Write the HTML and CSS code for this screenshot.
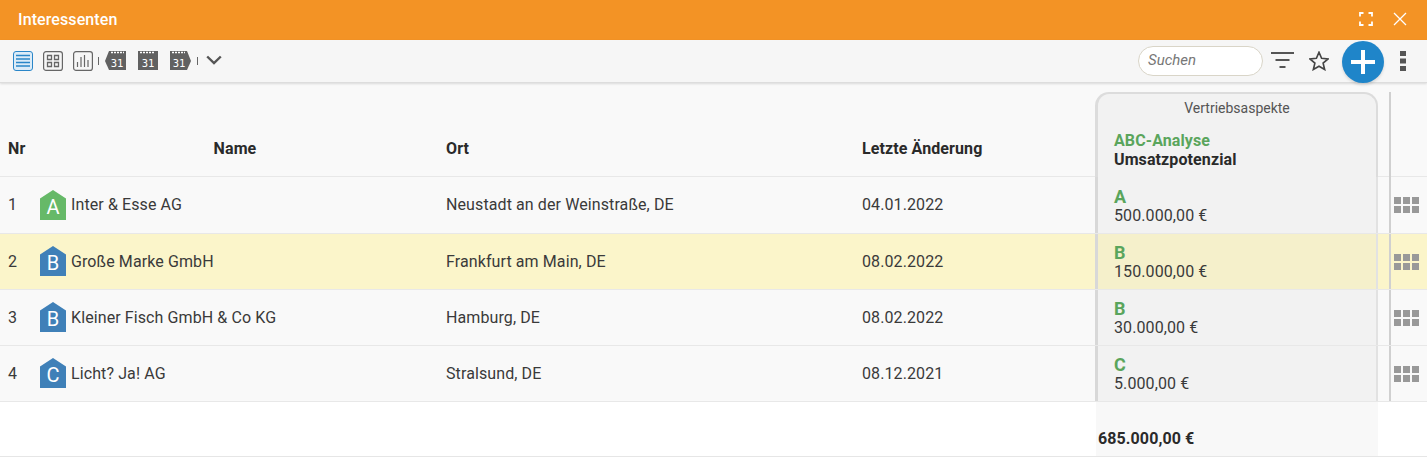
FILE: index.html
```html
<!DOCTYPE html>
<html lang="de">
<head>
<meta charset="utf-8">
<title>Interessenten</title>
<link rel="stylesheet" href="styles.css">
</head>
<body>
<header class="titlebar">
  <span class="title">Interessenten</span>
  <div class="title-actions">
    <svg class="ti" width="14" height="14" viewBox="0 0 14 14"><path d="M1 4.500V1h3.500M9.500 1H13v3.500M13 9.500V13H9.500M4.500 13H1V9.500" fill="none" stroke="#fff" stroke-width="1.800"/></svg>
    <svg class="ti" width="14" height="14" viewBox="0 0 14 14"><path d="M1 1l12 12M13 1L1 13" fill="none" stroke="#fff" stroke-width="1.300"/></svg>
  </div>
</header>
<nav class="toolbar">
  <div class="views">
    <svg class="view" width="20" height="20" viewBox="0 0 20 20"><rect x="0.5" y="0.5" width="19" height="19" rx="2.5" fill="#dcecf8" stroke="#2a86c8"/><path d="M3 4.500h14M3 8h14M3 11.500h14M3 15h14" stroke="#2a86c8" stroke-width="1.300"/></svg>
    <svg class="view" width="20" height="20" viewBox="0 0 20 20"><rect x="0.6" y="0.6" width="18.800" height="18.800" rx="2.5" fill="none" stroke="#666" stroke-width="1.200"/><path d="M4.500 4.500h4v4h-4zM11.500 4.500h4v4h-4zM4.500 11.500h4v4h-4zM11.500 11.500h4v4h-4z" fill="none" stroke="#666" stroke-width="1.300"/></svg>
    <svg class="view" width="20" height="20" viewBox="0 0 20 20"><rect x="0.6" y="0.6" width="18.800" height="18.800" rx="2.5" fill="none" stroke="#666" stroke-width="1.200"/><path d="M4.500 16v-5M8 16V6M11.500 16V4M15 16V9" fill="none" stroke="#666" stroke-width="1.200"/></svg>
    <i class="sep"></i>
    <span class="cal cal-prev"><svg width="21" height="20" viewBox="0 0 21 20"><path d="M4 0h17v19H4L0 10z" fill="#616161"/><path d="M6 1.500h13" stroke="#fff" stroke-width="1.500" stroke-dasharray="2 1"/></svg><b>31</b></span>
    <span class="cal"><svg width="20" height="20" viewBox="0 0 20 20"><path d="M0 0h20v19H0z" fill="#616161"/><path d="M2 1.500h15" stroke="#fff" stroke-width="1.500" stroke-dasharray="2 1"/></svg><b>31</b></span>
    <span class="cal cal-next"><svg width="21" height="20" viewBox="0 0 21 20"><path d="M0 0h17l4 10-4 9H0z" fill="#616161"/><path d="M2 1.500h13" stroke="#fff" stroke-width="1.500" stroke-dasharray="2 1"/></svg><b>31</b></span>
    <i class="sep"></i>
    <svg class="chev" width="16" height="10" viewBox="0 0 16 10"><path d="M1.200 1.500L8 8l6.800-6.500" fill="none" stroke="#555" stroke-width="2.400"/></svg>
  </div>
  <div class="tools">
    <div class="search">Suchen</div>
    <svg class="filter" width="24" height="18" viewBox="0 0 24 18"><path d="M0 2h23M4.500 9h14M8.500 16h6" stroke="#555" stroke-width="2" fill="none"/></svg>
    <svg class="star" width="20" height="20" viewBox="1.500 1.500 17 17"><path d="M10 2.600l2.200 5.100 5.500.5-4.200 3.600 1.300 5.400L10 14.400l-4.800 2.800 1.300-5.400L2.300 8.200l5.500-.5z" fill="none" stroke="#444" stroke-width="1.400"/></svg>
    <button class="add" type="button"><svg width="26" height="26" viewBox="0 0 26 26"><path d="M13 1v24M1 13h24" stroke="#fff" stroke-width="4"/></svg></button>
    <svg class="more" width="6" height="20" viewBox="0 0 6 20"><path d="M0 0h6v5H0zM0 7.500h6v5H0zM0 15h6v5H0z" fill="#555"/></svg>
  </div>
</nav>
<main class="table">
  <div class="row head">
    <div class="c nr"><strong>Nr</strong></div>
    <div class="c name"><strong class="name-head">Name</strong></div>
    <div class="c"><strong>Ort</strong></div>
    <div class="c"><strong>Letzte Änderung</strong></div>
    <div class="c aspect">
      <div class="aspect-box">
        <div class="aspect-title">Vertriebsaspekte</div>
        <div class="abc">ABC-Analyse</div>
        <strong>Umsatzpotenzial</strong>
      </div>
    </div>
    <div class="c act"></div>
  </div>
  <div class="row">
    <div class="c nr">1</div>
    <div class="c name"><span class="tag green">A</span>Inter &amp; Esse AG</div>
    <div class="c">Neustadt an der Weinstraße, DE</div>
    <div class="c">04.01.2022</div>
    <div class="c aspect"><div class="aspect-cell"><div class="abc big">A</div>500.000,00 €</div></div>
    <div class="c act"><i class="grid-icon"></i></div>
  </div>
  <div class="row hl">
    <div class="c nr">2</div>
    <div class="c name"><span class="tag blue">B</span>Große Marke GmbH</div>
    <div class="c">Frankfurt am Main, DE</div>
    <div class="c">08.02.2022</div>
    <div class="c aspect"><div class="aspect-cell"><div class="abc big">B</div>150.000,00 €</div></div>
    <div class="c act"><i class="grid-icon"></i></div>
  </div>
  <div class="row">
    <div class="c nr">3</div>
    <div class="c name"><span class="tag blue">B</span>Kleiner Fisch GmbH &amp; Co KG</div>
    <div class="c">Hamburg, DE</div>
    <div class="c">08.02.2022</div>
    <div class="c aspect"><div class="aspect-cell"><div class="abc big">B</div>30.000,00 €</div></div>
    <div class="c act"><i class="grid-icon"></i></div>
  </div>
  <div class="row">
    <div class="c nr">4</div>
    <div class="c name"><span class="tag blue">C</span>Licht? Ja! AG</div>
    <div class="c">Stralsund, DE</div>
    <div class="c">08.12.2021</div>
    <div class="c aspect"><div class="aspect-cell"><div class="abc big">C</div>5.000,00 €</div></div>
    <div class="c act"><i class="grid-icon"></i></div>
  </div>
  <div class="row foot">
    <div class="c"></div><div class="c"></div><div class="c"></div><div class="c"></div>
    <div class="c sum"><strong>685.000,00 €</strong></div>
    <div class="c"></div>
  </div>
</main>
</body>
</html>
```
FILE: styles.css
```css
* { box-sizing: border-box; }
html, body { margin: 0; padding: 0; height: 458px; overflow: hidden; }
body { background: #fff; font-family: Roboto, "Liberation Sans", sans-serif; font-size: 16px; letter-spacing: .1px; color: #3a3a3a; }
.titlebar { height: 40px; background: #f39325; display: flex; align-items: center; justify-content: space-between; padding: 0 20px 2px 18px; color: #fff; }
.title { font-size: 16px; font-weight: 500; }
.title-actions { display: flex; gap: 20px; }
.toolbar { height: 43px; background: #f6f6f6; border-bottom: 1px solid #ddd; box-shadow: 0 1px 2px rgba(0,0,0,.12); display: flex; justify-content: space-between; align-items: center; padding: 0 21px 0 13px; position: relative; z-index: 2; }
.views { display: flex; align-items: center; }
.view { margin-right: 10px; }
.view:nth-child(3) { margin-right: 5px; }
.sep { width: 1px; height: 8px; background: #666; }
.cal { position: relative; display: block; height: 20px; margin-left: 12px; }
.cal svg { display: block; }
.cal b { position: absolute; left: 0; right: 0; top: 6px; text-align: center; font: 400 10.500px/12px "DejaVu Sans Mono", monospace; letter-spacing: 0; color: #fff; }
.cal-prev { margin-left: 6px; }
.cal-prev b { left: 3px; }
.cal-next b { right: 3px; }
.cal-next { margin-right: 6px; }
.chev { margin-left: 8px; margin-top: -2px; }
.tools { display: flex; align-items: center; }
.search { width: 125px; height: 30px; border: 1px solid #d9d5c8; border-radius: 15px; background: #fff; font-style: italic; font-size: 15px; letter-spacing: 0; color: #777; line-height: 27px; padding-left: 9px; margin-right: 8px; }
.filter { margin-right: 14px; margin-top: -2px; }
.star { margin-right: 13px; }
.add { width: 42px; height: 42px; border-radius: 50%; border: 0; padding: 0; background: #1f85c9; display: flex; align-items: center; justify-content: center; box-shadow: 0 2px 3px rgba(0,0,0,.12); margin-top: 1px; margin-right: 16px; }
.more { display: block; }
.table { background: #f9f9f9; height: 374px; border-bottom: 1px solid #e6e6e6; }
.row { display: grid; grid-template-columns: 40px 406px 416px 233px 283px 49px; height: 56px; border-bottom: 1px solid #e8e8e8; }
.c { display: flex; align-items: center; }
.nr { padding-left: 8px; }
.head { height: 94px; }
.head .c { padding-top: 36px; }
.row:nth-child(2) { height: 57px; }
.row:nth-child(2) .c { padding-bottom: 1px; }
.hl { background: #fbf5ca; }
strong { font-weight: 700; color: #2a2a2a; }
.name-head { display: block; width: 390px; text-align: center; }
.tag { flex: none; width: 26px; height: 30px; margin-right: 5px; margin-top: -1px; color: #fff; font-size: 20px; letter-spacing: 0; line-height: 34px; text-align: center; clip-path: polygon(50% 0, 100% 28%, 100% 100%, 0 100%, 0 28%); }
.row:nth-child(2) .tag { margin-top: 1px; }
.green { background: #66b968; }
.blue { background: #3f80b8; }
.c.aspect { display: block; padding: 0; background: #f2f2f2; border-left: 3px solid #d8d8d8; border-right: 2px solid #e2e2e2; }
.hl .aspect { background: #f5f0cb; }
.aspect-cell { padding: 9px 0 0 16px; line-height: 19px; }
.row:nth-child(2) .aspect-cell { padding-top: 10px; }
.abc { color: #5aa55c; font-weight: 700; }
.big { font-size: 18px; line-height: 19px; }
.head .c.aspect { background: none; border: 0; padding: 9px 0 0 0; }
.aspect-box { height: 85px; background: #f2f2f2; border: 2px solid #dcdcdc; border-left-width: 3px; border-bottom: 0; border-radius: 14px 14px 0 0; padding-left: 16px; line-height: 19px; }
.aspect-title { font-size: 14px; letter-spacing: 0; text-align: center; color: #555; padding-top: 5px; height: 37px; margin-left: -16px; }
.act { margin-left: 11px; border-left: 2px solid #d0d0d0; padding: 0; }
.head .c.act { margin-top: 9px; padding-top: 0; }
.grid-icon { display: block; width: 25px; height: 16px; margin-left: 3px; background: #999; mask: linear-gradient(#000 7px, transparent 7px, transparent 9px, #000 9px), linear-gradient(90deg, #000 7px, transparent 7px, transparent 9px, #000 9px, #000 16px, transparent 16px, transparent 18px, #000 18px); mask-composite: intersect; -webkit-mask-composite: source-in; }
.foot { height: 55px; background: #fff; border-bottom: 1px solid #e6e6e6; }
.sum { background: #f8f8f8; align-items: flex-end; padding: 0 0 8px 2px; margin-left: 1px; }
```
